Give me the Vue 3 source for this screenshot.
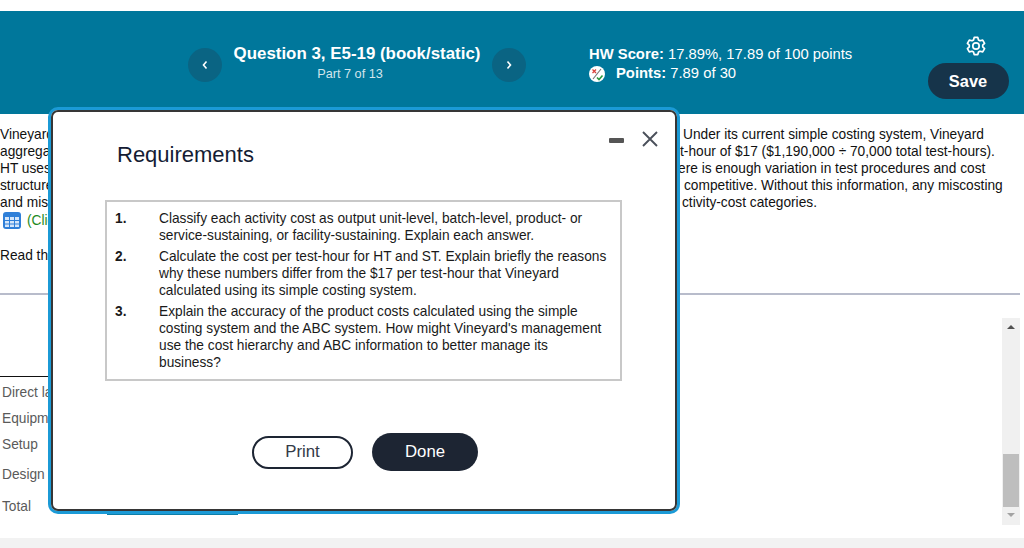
<template>
  <div class="page">
    <header class="topbar">
      <div class="question-nav">
        <button class="nav-btn" aria-label="Previous question">
          <svg width="8" height="10" viewBox="0 0 8 10"><path d="M5.5 1.5 2.5 5l3 3.5" fill="none" stroke="#fff" stroke-width="1.6" /></svg>
        </button>
        <div class="question-title">
          <div class="title">Question 3, E5-19 (book/static)</div>
          <div class="part">Part 7 of 13</div>
        </div>
        <button class="nav-btn" aria-label="Next question">
          <svg width="8" height="10" viewBox="0 0 8 10"><path d="M2.5 1.5 5.5 5l-3 3.5" fill="none" stroke="#fff" stroke-width="1.6" /></svg>
        </button>
      </div>
      <div class="score">
        <div><b>HW Score:</b> 17.89%, 17.89 of 100 points</div>
        <div class="points">
          <svg class="points-icon" width="16" height="16" viewBox="0 0 16 16">
            <circle cx="8" cy="8" r="8" fill="#fff" />
            <path d="M3.5 3.5 7 7M7 3.5 3.5 7" stroke="#d9423b" stroke-width="1.3" />
            <path d="M4 13 12 3" stroke="#777" stroke-width="1.2" />
            <path d="M8 11.5l2 2 3.5-4" fill="none" stroke="#2a9a3c" stroke-width="1.6" />
          </svg>
          <span><b>Points:</b> 7.89 of 30</span>
        </div>
      </div>
      <div class="actions">
        <svg class="gear" width="20" height="20" viewBox="0 0 20 20" fill="none" stroke="#fff" stroke-width="1.7" stroke-linejoin="round">
          <path d="M8.200 1.400h3.600l.7 2.500 1.500.9 2.700-.7 1.900 3.300-1.900 1.800v1.600l1.900 1.800-1.900 3.300-2.700-.7-1.500.9-.7 2.500H8.200l-.7-2.500-1.500-.9-2.700.7-1.900-3.300 1.900-1.800V9.200L1.400 7.400l1.900-3.300 2.700.7 1.500-.9z" />
          <circle cx="10" cy="10" r="3.200" />
        </svg>
        <button class="save">Save</button>
      </div>
    </header>

    <main class="content">
      <section class="intro">
        <div class="intro-left">
          <div>Vineyard</div>
          <div>aggregate</div>
          <div>HT uses</div>
          <div>structure</div>
          <div>and mis</div>
          <div class="data-link">
            <svg width="18" height="17" viewBox="0 0 18 17">
              <rect width="18" height="17" rx="3" fill="#2f7fd8" />
              <path d="M2 5h4v3H2zM7 5h4v3H7zM12 5h4v3h-4zM2 9h4v2.500H2zM7 9h4v2.500H7zM12 9h4v2.500h-4zM2 12.500h4V15H2zM7 12.500h4V15H7zM12 12.500h4V15h-4z" fill="#d5e6fa" />
            </svg>
            <span>(Click</span>
          </div>
          <div class="read">Read the</div>
        </div>
        <div class="intro-right">
          <div class="l1">Under its current simple costing system, Vineyard</div>
          <div class="l2">t-hour of $17 ($1,190,000 ÷ 70,000 total test-hours).</div>
          <div class="l3">ere is enough variation in test procedures and cost</div>
          <div class="l4">competitive. Without this information, any miscosting</div>
          <div class="l5">ctivity-cost categories.</div>
        </div>
      </section>
      <hr class="divider" />
      <section class="table-pane">
        <div class="cost-table">
          <div class="row row-first">Direct labor</div>
          <div class="row">Equipment</div>
          <div class="row row-setup">Setup</div>
          <div class="row row-design">Design</div>
          <div class="row row-total">Total</div>
          <div class="total-rule"></div>
        </div>
        <div class="scrollbar">
          <span class="arrow up"></span>
          <div class="track"><div class="thumb"></div></div>
          <span class="arrow down"></span>
        </div>
      </section>
    </main>
    <footer class="footer"></footer>

    <div class="modal">
      <div class="modal-inner">
        <div class="modal-head">
          <h2>Requirements</h2>
          <div class="modal-controls">
            <span class="minimize"></span>
            <svg width="18" height="18" viewBox="0 0 18 18"><path d="M2 2l14 14M16 2 2 16" stroke="#4a505a" stroke-width="1.9" /></svg>
          </div>
        </div>
        <ol class="req-list">
          <li v-for="(req, i) in requirements" :key="i">
            <b class="num">{{ i + 1 }}.</b>
            <span>{{ req }}</span>
          </li>
        </ol>
        <div class="modal-buttons">
          <button class="btn-print">Print</button>
          <button class="btn-done">Done</button>
        </div>
      </div>
    </div>
  </div>
</template>

<script setup>
const requirements = [
  'Classify each activity cost as output unit-level, batch-level, product- or service-sustaining, or facility-sustaining. Explain each answer.',
  'Calculate the cost per test-hour for HT and ST. Explain briefly the reasons why these numbers differ from the $17 per test-hour that Vineyard calculated using its simple costing system.',
  "Explain the accuracy of the product costs calculated using the simple costing system and the ABC system. How might Vineyard's management use the cost hierarchy and ABC information to better manage its business?"
];
</script>

<style>
html, body {
  margin: 0;
  overflow: hidden;
  background: #fff;
}
</style>

<style scoped>
.page {
  position: relative;
  width: 1024px;
  height: 548px;
  overflow: hidden;
  display: flex;
  flex-direction: column;
  padding-top: 11px;
  box-sizing: border-box;
  font-family: "Liberation Sans", Arial, sans-serif;
  color: #111;
}

button {
  font-family: inherit;
  cursor: pointer;
  border: none;
}

/* --- Top bar --- */
.topbar {
  height: 103px;
  flex: none;
  background: #00779b;
  color: #fff;
  display: flex;
  box-sizing: border-box;
  padding-left: 188px;
}
.question-nav {
  display: flex;
  align-items: flex-start;
  padding-top: 37px;
  width: 338px;
}
.nav-btn {
  width: 34px;
  height: 34px;
  border-radius: 50%;
  background: #0a6483;
  padding: 0;
  display: flex;
  align-items: center;
  justify-content: center;
  flex: none;
}
.question-title {
  flex: 1;
  text-align: center;
  margin-top: -5px;
}
.title {
  font-size: 16.9px;
  font-weight: 700;
  line-height: 22px;
}
.part {
  font-size: 12.7px;
  line-height: 18px;
  color: #d3e5ec;
  margin-right: 14px;
}
.score {
  margin-left: 63px;
  width: 339px;
  padding-top: 34px;
  font-size: 14.8px;
  line-height: 19px;
}
.points {
  display: flex;
  align-items: center;
  gap: 11px;
}
.points-icon {
  flex: none;
}
.actions {
  width: 80px;
  display: flex;
  flex-direction: column;
  align-items: center;
  padding-top: 25px;
}
.gear {
  margin-left: 16px;
}
.save {
  margin-top: 7px;
  width: 81px;
  height: 36px;
  flex: none;
  padding: 0;
  border-radius: 18px;
  background: #16344a;
  color: #fff;
  font-size: 16.4px;
  font-weight: 700;
}

/* --- Content behind the dialog --- */
.content {
  flex: 1;
  display: flex;
  flex-direction: column;
  font-size: 13.73px;
  line-height: 17px;
}
.intro {
  display: flex;
  height: 179px;
  box-sizing: border-box;
  padding-top: 12px;
}
.intro-left {
  width: 677px;
  flex: none;
  box-sizing: border-box;
}
.data-link {
  display: flex;
  align-items: center;
  gap: 6px;
  height: 19px;
  padding-left: 3px;
  color: #1e8a1e;
}
.read {
  margin-top: 17px;
}
.intro-right {
  white-space: nowrap;
}
.l1 { padding-left: 6px; }
.l2 { padding-left: 3px; }
.l3 { padding-left: 1px; }
.l4 { padding-left: 7px; }
.l5 { padding-left: 5px; }

.divider {
  margin: 0 4px 0 0;
  border: none;
  height: 2px;
  background: #b8bccb;
  flex: none;
}
.table-pane {
  flex: 1;
  display: flex;
  justify-content: space-between;
  align-items: flex-start;
  padding-top: 23px;
}
.cost-table {
  width: 240px;
  margin-top: 58px;
  border-top: 1px solid #111;
  color: #5a5a5a;
  padding-left: 2px;
  box-sizing: border-box;
  display: flex;
  flex-direction: column;
  position: relative;
}
.row {
  height: 26px;
  line-height: 26px;
}
.row-first {
  margin-top: 3px;
}
.row-design {
  margin-top: 4px;
}
.row-total {
  margin-top: 6px;
}
.total-rule {
  position: absolute;
  left: 107px;
  right: 2px;
  bottom: 5px;
  height: 2px;
  background: #0d7fa8;
}
.scrollbar {
  width: 18px;
  height: 207px;
  margin-right: 4px;
  background: #f0f0f0;
  display: flex;
  flex-direction: column;
  align-items: center;
}
.arrow {
  width: 0;
  height: 0;
  flex: none;
  border-left: 4px solid transparent;
  border-right: 4px solid transparent;
}
.arrow.up {
  margin: 7px 0 6px;
  border-bottom: 4px solid #505050;
}
.arrow.down {
  margin: 6px 0 8px;
  border-top: 4px solid #a3a3a3;
}
.track {
  flex: 1;
  width: 100%;
  display: flex;
  align-items: flex-end;
  justify-content: center;
}
.thumb {
  width: 16px;
  height: 53px;
  background: #bebebe;
}
.footer {
  height: 10px;
  flex: none;
  background: #f2f2f2;
}

/* --- Requirements dialog --- */
.modal {
  position: absolute;
  left: 48px;
  top: 107px;
  width: 632px;
  height: 407px;
  box-sizing: border-box;
  border: 3px solid #1b9ad6;
  border-radius: 10px;
  background: #fff;
}
.modal-inner {
  height: 100%;
  box-sizing: border-box;
  border: 2px solid #363636;
  border-radius: 7px;
  padding: 0 53px 0 52px;
  display: flex;
  flex-direction: column;
}
.modal-head {
  display: flex;
  justify-content: space-between;
  height: 88px;
  flex: none;
  margin-right: -37px;
}
.modal-head h2 {
  margin: 27px 0 0 12px;
  font-size: 22px;
  line-height: 32px;
  font-weight: 400;
  color: #141c33;
}
.modal-controls {
  display: flex;
  align-items: flex-start;
  gap: 17px;
  padding-top: 18px;
}
.minimize {
  width: 15px;
  height: 5px;
  margin-top: 8px;
  background: #555;
  border-radius: 1px;
}
.req-list {
  list-style: none;
  margin: 0;
  padding: 8px 8px 8px 8px;
  border: 2px solid #c8c8c8;
  height: 181px;
  box-sizing: border-box;
  display: flex;
  flex-direction: column;
  gap: 4px;
  font-size: 13.72px;
  line-height: 17px;
  color: #1a1a1a;
}
.req-list li {
  display: flex;
}
.num {
  width: 44px;
  flex: none;
}
.modal-buttons {
  display: flex;
  justify-content: center;
  align-items: center;
  gap: 19px;
  margin-top: 52px;
  padding-left: 3px;
}
.btn-print {
  width: 101px;
  height: 33px;
  padding: 0;
  border-radius: 17px;
  background: #fff;
  border: 2px solid #1d2533;
  color: #333a47;
  font-size: 16.8px;
}
.btn-done {
  width: 106px;
  height: 38px;
  padding: 0;
  border-radius: 19px;
  background: #1d2533;
  color: #fff;
  font-size: 16.8px;
}
</style>
